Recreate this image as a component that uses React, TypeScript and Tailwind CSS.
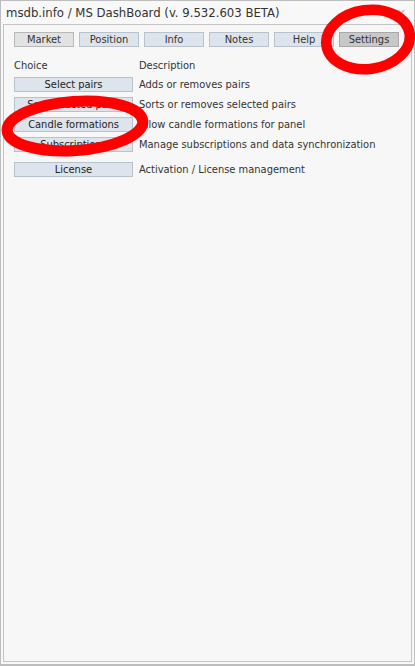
import React from "react";

const font = { fontFamily: '"DejaVu Sans Condensed", "DejaVu Sans", sans-serif' };

const tabs = ["Market", "Position", "Info", "Notes", "Help", "Settings"];

const rows: { label: string; desc: string; gap?: boolean }[] = [
  { label: "Select pairs", desc: "Adds or removes pairs" },
  { label: "Sort selected pairs", desc: "Sorts or removes selected pairs" },
  { label: "Candle formations", desc: "Allow candle formations for panel" },
  { label: "Subscriptions", desc: "Manage subscriptions and data synchronization" },
  { label: "License", desc: "Activation / License management", gap: true },
];

export default function App() {
  return (
    <div
      className="relative w-[415px] h-[666px] bg-[#f8f8f8] border border-[#bdbdbd] border-b-2 flex flex-col text-[#333]"
      style={font}
    >
      <div className="h-[23px] flex items-center justify-between pl-[5px] pr-[8px]">
        <span className="text-[13px] leading-none">msdb.info / MS DashBoard (v. 9.532.603 BETA)</span>
        <span className="text-[#b8b8b8] text-[13px] font-bold leading-none">×</span>
      </div>
      <div className="flex-1 mx-[2px] mb-[2px] border border-[#c4c4c4] bg-[#f7f7f7] pl-[10px] pr-[10px] pt-[7px]">
        <div className="flex gap-[5px]">
          {tabs.map((t) => (
            <div
              key={t}
              className={
                "w-[60px] h-[15px] flex items-center justify-center text-[11px] leading-none border " +
                (t === "Settings"
                  ? "bg-[#c8c8c8] border-[#a8a8a8]"
                  : t === "Market"
                  ? "bg-[#e2e2e2] border-[#b8b8b8]"
                  : "bg-[#dde4ec] border-[#b8c2cc]")
              }
            >
              {t}
            </div>
          ))}
        </div>
        <div className="flex mt-[13px] text-[11px] leading-none">
          <div className="w-[125px]">Choice</div>
          <div>Description</div>
        </div>
        <div className="flex flex-col mt-[6px]">
          {rows.map((r) => (
            <div key={r.label} className={"flex items-center h-[15px] mb-[5px] " + (r.gap ? "mt-[5px]" : "")}>
              <div className="w-[119px] h-[15px] flex items-center justify-center text-[11px] leading-none bg-[#dde4ec] border border-[#b8c2cc] text-[#222]">
                {r.label}
              </div>
              <div className="ml-[6px] text-[11px] leading-none">{r.desc}</div>
            </div>
          ))}
        </div>
      </div>
      <svg className="absolute left-0 top-0 pointer-events-none" width="415" height="666" viewBox="0 0 415 666">
        <ellipse cx="367" cy="38.5" rx="42" ry="29.5" fill="none" stroke="#ff0000" strokeWidth="10.5" transform="rotate(-8 367 38.5)" />
        <ellipse cx="74" cy="125" rx="68" ry="24.5" fill="none" stroke="#ff0000" strokeWidth="11" transform="rotate(-4 74 125)" />
      </svg>
    </div>
  );
}
